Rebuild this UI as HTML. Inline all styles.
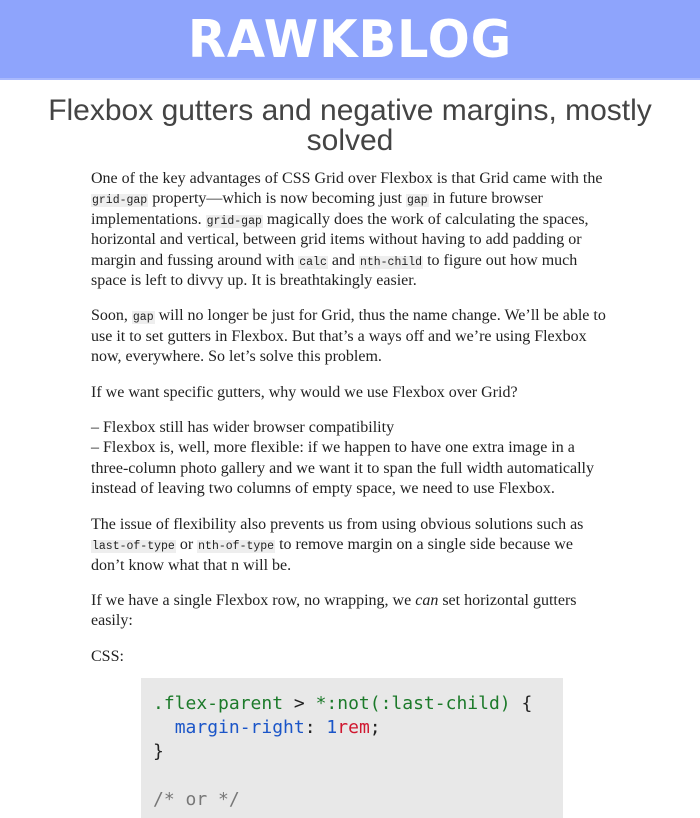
<!DOCTYPE html>
<html><head><meta charset="utf-8"><style>
body{margin:0;background:#fff;font-family:"Liberation Serif",serif;color:#222;}
header{height:80px;background:#8ea4fc;border-bottom:2px solid #a9b9fd;text-align:center;box-sizing:border-box}
header div{font-family:"DejaVu Sans","Liberation Sans",sans-serif;font-weight:bold;color:#fff;font-size:52px;line-height:80px;letter-spacing:1px;transform:scaleX(0.95)}
h1{font-family:"Liberation Sans",sans-serif;font-weight:normal;color:#444;font-size:30px;line-height:30px;text-align:center;margin:0;position:absolute;top:96px;left:20px;right:20px}
main{position:absolute;top:169px;left:91px;width:518px;font-size:16px;line-height:20.4px}
p{margin:0 0 15px}
code{font-family:"Liberation Mono",monospace;font-size:11.5px;background:#eee;padding:0 1px;line-height:1}
pre{margin:-4px 0 0 50px;width:422px;height:140px;background:#e8e8e8;padding:14px 0 0 12px;box-sizing:border-box;font-family:"DejaVu Sans Mono",monospace;font-size:18px;line-height:24px;color:#222}
.g{color:#1c7a2a}.b{color:#1a55c8}.r{color:#d0172f}.c{color:#777}
</style></head><body>
<header><div>RAWKBLOG</div></header>
<h1>Flexbox gutters and negative margins, mostly solved</h1>
<main>
<p>One of the key advantages of CSS Grid over Flexbox is that Grid came with the <code>grid-gap</code> property—which is now becoming just <code>gap</code> in future browser implementations. <code>grid-gap</code> magically does the work of calculating the spaces, horizontal and vertical, between grid items without having to add padding or margin and fussing around with <code>calc</code> and <code>nth-child</code> to figure out how much space is left to divvy up. It is breathtakingly easier.</p>
<p>Soon, <code>gap</code> will no longer be just for Grid, thus the name change. We’ll be able to use it to set gutters in Flexbox. But that’s a ways off and we’re using Flexbox now, everywhere. So let’s solve this problem.</p>
<p>If we want specific gutters, why would we use Flexbox over Grid?</p>
<p>– Flexbox still has wider browser compatibility<br>– Flexbox is, well, more flexible: if we happen to have one extra image in a three-column photo gallery and we want it to span the full width automatically instead of leaving two columns of empty space, we need to use Flexbox.</p>
<p>The issue of flexibility also prevents us from using obvious solutions such as <code>last-of-type</code> or <code>nth-of-type</code> to remove margin on a single side because we don’t know what that n will be.</p>
<p>If we have a single Flexbox row, no wrapping, we <i>can</i> set horizontal gutters easily:</p>
<p>CSS:</p>
<pre><span class="g">.flex-parent</span> &gt; <span class="g">*:not(:last-child)</span> {
  <span class="b">margin-right</span>: <span class="b">1</span><span class="r">rem</span>;
}

<span class="c">/* or */</span></pre>
</main>
</body></html>
